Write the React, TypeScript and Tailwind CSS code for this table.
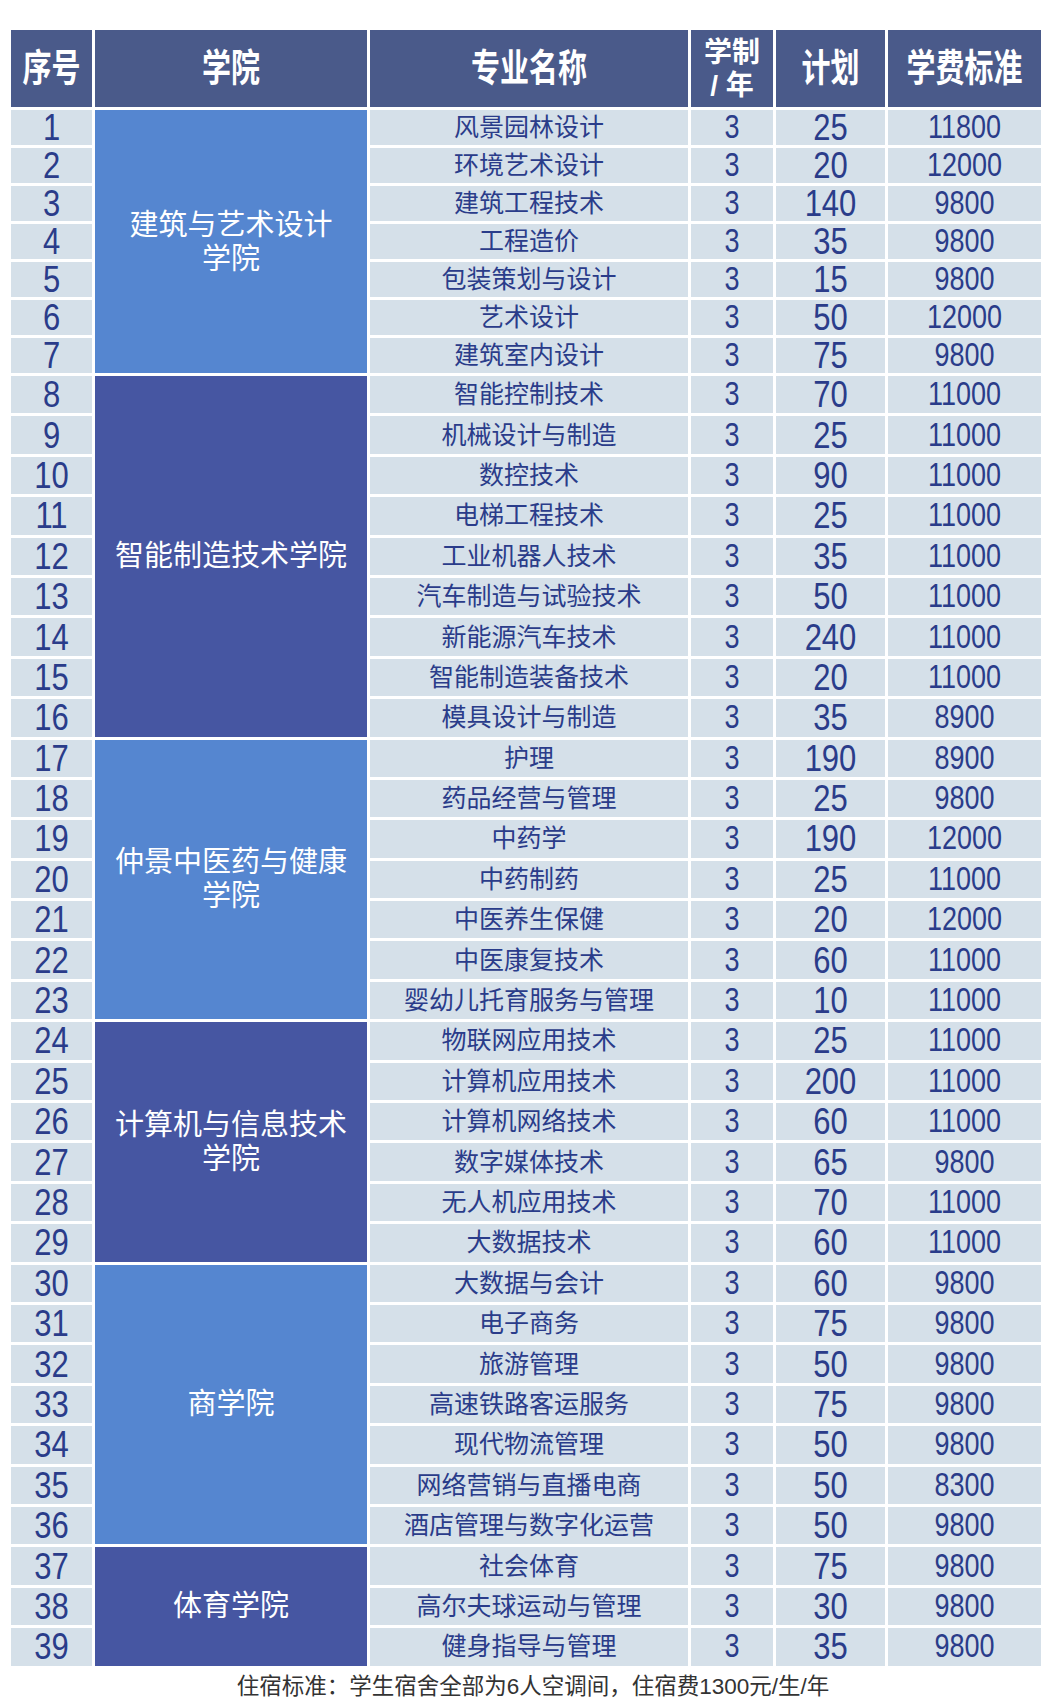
type Major = [number, string, number, number];

interface Group {
  college: string[];
  tone: "light" | "dark";
  majors: Major[];
}

const GROUPS: Group[] = [
  {
    college: ["建筑与艺术设计", "学院"],
    tone: "light",
    majors: [
      [1, "风景园林设计", 25, 11800],
      [2, "环境艺术设计", 20, 12000],
      [3, "建筑工程技术", 140, 9800],
      [4, "工程造价", 35, 9800],
      [5, "包装策划与设计", 15, 9800],
      [6, "艺术设计", 50, 12000],
      [7, "建筑室内设计", 75, 9800],
    ],
  },
  {
    college: ["智能制造技术学院"],
    tone: "dark",
    majors: [
      [8, "智能控制技术", 70, 11000],
      [9, "机械设计与制造", 25, 11000],
      [10, "数控技术", 90, 11000],
      [11, "电梯工程技术", 25, 11000],
      [12, "工业机器人技术", 35, 11000],
      [13, "汽车制造与试验技术", 50, 11000],
      [14, "新能源汽车技术", 240, 11000],
      [15, "智能制造装备技术", 20, 11000],
      [16, "模具设计与制造", 35, 8900],
    ],
  },
  {
    college: ["仲景中医药与健康", "学院"],
    tone: "light",
    majors: [
      [17, "护理", 190, 8900],
      [18, "药品经营与管理", 25, 9800],
      [19, "中药学", 190, 12000],
      [20, "中药制药", 25, 11000],
      [21, "中医养生保健", 20, 12000],
      [22, "中医康复技术", 60, 11000],
      [23, "婴幼儿托育服务与管理", 10, 11000],
    ],
  },
  {
    college: ["计算机与信息技术", "学院"],
    tone: "dark",
    majors: [
      [24, "物联网应用技术", 25, 11000],
      [25, "计算机应用技术", 200, 11000],
      [26, "计算机网络技术", 60, 11000],
      [27, "数字媒体技术", 65, 9800],
      [28, "无人机应用技术", 70, 11000],
      [29, "大数据技术", 60, 11000],
    ],
  },
  {
    college: ["商学院"],
    tone: "light",
    majors: [
      [30, "大数据与会计", 60, 9800],
      [31, "电子商务", 75, 9800],
      [32, "旅游管理", 50, 9800],
      [33, "高速铁路客运服务", 75, 9800],
      [34, "现代物流管理", 50, 9800],
      [35, "网络营销与直播电商", 50, 8300],
      [36, "酒店管理与数字化运营", 50, 9800],
    ],
  },
  {
    college: ["体育学院"],
    tone: "dark",
    majors: [
      [37, "社会体育", 75, 9800],
      [38, "高尔夫球运动与管理", 30, 9800],
      [39, "健身指导与管理", 35, 9800],
    ],
  },
];

// full class names so tailwind picks them up
const SPAN: Record<number, string> = {
  3: "row-span-3",
  6: "row-span-6",
  7: "row-span-7",
  9: "row-span-9",
};

const FONT = "font-['Liberation_Sans','Noto_Sans_CJK_SC',sans-serif]";
const CELL = "flex items-center justify-center bg-[#d5e0e9] text-[#2a3c8a]";
const HEAD = "flex h-[77px] items-center justify-center bg-[#4a5a8a] text-white";

function Num({ v, size }: { v: number; size: string }) {
  return <span className={`inline-block scale-y-[1.2] leading-none ${size}`}>{v}</span>;
}

export default function App() {
  return (
    <div className={`w-[1050px] bg-white pt-[30px] ${FONT}`}>
      <div className="ml-[11px] grid grid-cols-[81px_272px_318px_82px_109px_153px] gap-[3px]">
        {/* Header */}
        {["序号", "学院", "专业名称"].map((h) => (
          <div key={h} className={HEAD}>
            <span className="inline-block scale-y-[1.3] text-[29px] font-bold leading-none">{h}</span>
          </div>
        ))}
        <div className={`${HEAD} flex-col`}>
          <span className="text-[28px] font-bold leading-[33px]">学制</span>
          <span className="text-[28px] font-bold leading-[33px]">/ 年</span>
        </div>
        {["计划", "学费标准"].map((h) => (
          <div key={h} className={HEAD}>
            <span className="inline-block scale-y-[1.3] text-[29px] font-bold leading-none">{h}</span>
          </div>
        ))}

        {GROUPS.map((g, gi) =>
          g.majors.map(([no, name, plan, fee], i) => {
            const h = gi === 0 ? "h-[35px]" : "h-[37.4px]";
            return [
              <div key={`n${no}`} className={`${CELL} ${h}`}>
                <Num v={no} size="text-[31px]" />
              </div>,
              i === 0 && (
                <div
                  key={`c${gi}`}
                  className={`${SPAN[g.majors.length]} flex flex-col items-center justify-center text-white ${
                    g.tone === "light" ? "bg-[#5586d0]" : "bg-[#4656a2]"
                  }`}
                >
                  {g.college.map((line) => (
                    <span key={line} className="text-[29px] leading-[34px]">
                      {line}
                    </span>
                  ))}
                </div>
              ),
              <div key={`m${no}`} className={`${CELL} ${h}`}>
                <span className="text-[25px] leading-none">{name}</span>
              </div>,
              <div key={`y${no}`} className={`${CELL} ${h}`}>
                <Num v={3} size="text-[27px]" />
              </div>,
              <div key={`p${no}`} className={`${CELL} ${h}`}>
                <Num v={plan} size="text-[31px]" />
              </div>,
              <div key={`f${no}`} className={`${CELL} ${h}`}>
                <Num v={fee} size="text-[27px]" />
              </div>,
            ];
          })
        )}
      </div>

      <p className="mt-[2px] pl-[16px] text-center text-[22.5px] leading-[38px] text-[#333]">
        住宿标准：学生宿舍全部为6人空调间，住宿费1300元/生/年
      </p>
    </div>
  );
}
